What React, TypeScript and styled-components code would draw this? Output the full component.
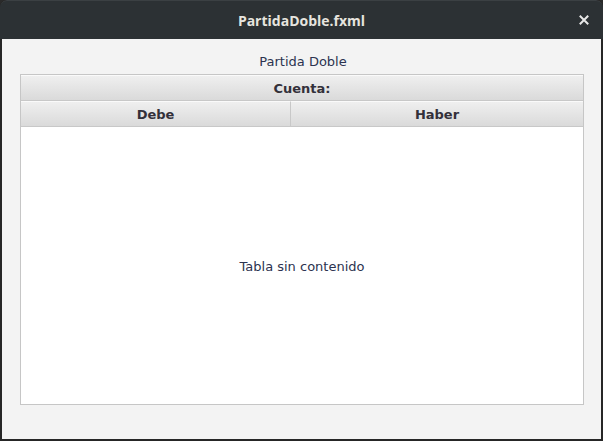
import React from "react";
import styled, { createGlobalStyle } from "styled-components";

const Global = createGlobalStyle`
  html, body { margin: 0; padding: 0; background: #2a2a2a; }
  * { box-sizing: border-box; }
`;

const Frame = styled.div`
  width: 603px;
  height: 441px;
  background: #262626;
  display: flex;
  flex-direction: column;
  padding: 0 2px 2px 2px;
  border-radius: 7px 7px 0 0;
  overflow: hidden;
`;

const TitleBar = styled.div`
  height: 39px;
  flex: 0 0 39px;
  margin: 0 -2px;
  padding: 0 2px;
  background: #2c3134;
  border-radius: 7px 7px 0 0;
  border-top: 1px solid #3b4043;
  position: relative;
  display: flex;
  align-items: center;
  justify-content: center;
`;

const Title = styled.span`
  font-family: "Open Sans", "DejaVu Sans", sans-serif;
  font-weight: 700;
  font-size: 14px;
  color: #e6e4df;
  margin-top: 0px;
`;

const Close = styled.div`
  position: absolute;
  right: 14px;
  top: 10px;
  width: 10px;
  height: 10px;
`;

const Content = styled.div`
  flex: 1;
  background: #f3f3f3;
  display: flex;
  flex-direction: column;
  align-items: stretch;
  padding: 13px 17px 34px 18px;
`;

const Heading = styled.div`
  font-family: "DejaVu Sans", sans-serif;
  font-size: 13px;
  color: #2c3350;
  text-align: center;
  height: 22px;
  line-height: 19px;
  padding-left: 2px;
`;

const Table = styled.div`
  flex: 1;
  border: 1px solid #c6c6c6;
  display: flex;
  flex-direction: column;
  background: #ffffff;
`;

const HeaderRow = styled.div`
  display: flex;
  height: 26px;
  flex: 0 0 26px;
  border-bottom: 1px solid #c8c8c8;
`;

const HeaderCell = styled.div<{ $w?: number }>`
  flex: ${(p) => (p.$w ? `0 0 ${p.$w}px` : "1")};
  background: linear-gradient(#efefef, #dadada);
  border-top: 1px solid #fafafa;
  border-right: 1px solid #c8c8c8;
  display: flex;
  align-items: center;
  justify-content: center;
  font-family: "DejaVu Sans", sans-serif;
  font-weight: 700;
  font-size: 13px;
  color: #33303a;
  &:last-child { border-right: none; }
`;

const Body = styled.div`
  flex: 1;
  background: #fff;
  display: flex;
  align-items: center;
  justify-content: center;
  font-family: "DejaVu Sans", sans-serif;
  font-size: 13px;
  color: #2c3350;
  padding-top: 2px;
`;

export default function App() {
  return (
    <>
      <Global />
      <Frame>
        <TitleBar>
          <Title>PartidaDoble.fxml</Title>
          <Close>
            <svg width="10" height="10" viewBox="0 0 10 10">
              <path d="M1.5 1.5 L8.5 8.5 M8.5 1.5 L1.5 8.5" stroke="#e8e8e8" strokeWidth="2" strokeLinecap="square" />
            </svg>
          </Close>
        </TitleBar>
        <Content>
          <Heading>Partida Doble</Heading>
          <Table>
            <HeaderRow>
              <HeaderCell>Cuenta:</HeaderCell>
            </HeaderRow>
            <HeaderRow>
              <HeaderCell $w={270}>Debe</HeaderCell>
              <HeaderCell>Haber</HeaderCell>
            </HeaderRow>
            <Body>Tabla sin contenido</Body>
          </Table>
        </Content>
      </Frame>
    </>
  );
}
